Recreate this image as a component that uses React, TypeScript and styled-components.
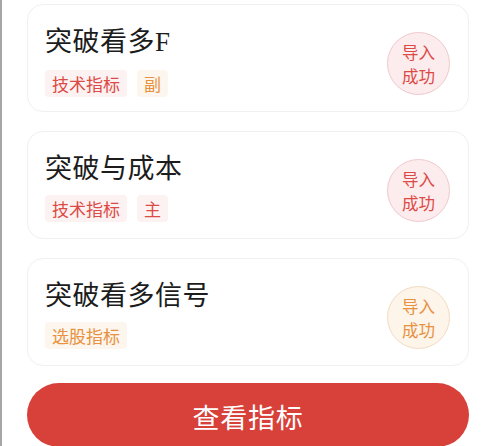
import React from "react";
import styled, { createGlobalStyle } from "styled-components";

const Global = createGlobalStyle`
  html, body { margin: 0; padding: 0; background: #ffffff; }
  body { font-family: "Noto Sans CJK SC", "Noto Sans", sans-serif; overflow: hidden; }
`;

type Tone = "red" | "orange";

const palette = {
  red: { text: "#dc4a45", bg: "#fdf2f2", circleBg: "#fcecee", circleBorder: "#efc9cd" },
  orange: { text: "#e8913e", bg: "#fdf6ee", circleBg: "#fdf4ea", circleBorder: "#f2dcc2" },
};

const Page = styled.div`
  border-left: 2px solid #a6a6a6;
  min-height: 446px;
  box-sizing: border-box;
  padding: 4px 23px 0 25px;
  display: flex;
  flex-direction: column;
  gap: 19px;
`;

const Card = styled.div`
  background: #ffffff;
  border: 1px solid #f0f0f0;
  border-radius: 16px;
  height: 108px;
  box-sizing: border-box;
  padding: 19px 18px 0 17px;
  display: flex;
  align-items: flex-start;
  justify-content: space-between;
`;

const Info = styled.div`
  display: flex;
  flex-direction: column;
  gap: 12px;
`;

const Title = styled.div`
  font-size: 27px;
  line-height: 32px;
  color: #1c1c1c;
  letter-spacing: 0.5px;
`;

const Latin = styled.span`
  font-family: "Liberation Serif", serif;
`;

const Tags = styled.div`
  display: flex;
  gap: 10px;
`;

const Tag = styled.span<{ $tone: Tone }>`
  font-size: 17px;
  line-height: 27px;
  height: 27px;
  padding: 0 7px;
  border-radius: 4px;
  color: ${(p) => palette[p.$tone].text};
  background: ${(p) => palette[p.$tone].bg};
`;

const Stamp = styled.div<{ $tone: Tone }>`
  width: 63px;
  height: 63px;
  margin-top: 8px;
  border-radius: 50%;
  box-sizing: border-box;
  border: 1px solid ${(p) => palette[p.$tone].circleBorder};
  background: ${(p) => palette[p.$tone].circleBg};
  color: ${(p) => palette[p.$tone].text};
  font-size: 16.5px;
  line-height: 24px;
  display: flex;
  flex-direction: column;
  align-items: center;
  justify-content: center;
  flex-shrink: 0;
`;

const Button = styled.button`
  margin-top: -2px;
  height: 64px;
  border: none;
  border-radius: 32px;
  background: #d8403a;
  color: #ffffff;
  font-family: "Noto Sans CJK SC", "Noto Sans", sans-serif;
  font-size: 27px;
  letter-spacing: 0.8px;
  padding: 2px 0 0;
  display: flex;
  align-items: center;
  justify-content: center;
`;

type Item = {
  title: React.ReactNode;
  tags: { label: string; tone: Tone }[];
  tone: Tone;
};

const items: Item[] = [
  {
    title: (
      <>
        突破看多<Latin>F</Latin>
      </>
    ),
    tags: [
      { label: "技术指标", tone: "red" },
      { label: "副", tone: "orange" },
    ],
    tone: "red",
  },
  {
    title: "突破与成本",
    tags: [
      { label: "技术指标", tone: "red" },
      { label: "主", tone: "red" },
    ],
    tone: "red",
  },
  {
    title: "突破看多信号",
    tags: [{ label: "选股指标", tone: "orange" }],
    tone: "orange",
  },
];

export default function App() {
  return (
    <>
      <Global />
      <Page>
        {items.map((it, i) => (
          <Card key={i}>
            <Info>
              <Title>{it.title}</Title>
              <Tags>
                {it.tags.map((t) => (
                  <Tag key={t.label} $tone={t.tone}>
                    {t.label}
                  </Tag>
                ))}
              </Tags>
            </Info>
            <Stamp $tone={it.tone}>
              <span>导入</span>
              <span>成功</span>
            </Stamp>
          </Card>
        ))}
        <Button>查看指标</Button>
      </Page>
    </>
  );
}
